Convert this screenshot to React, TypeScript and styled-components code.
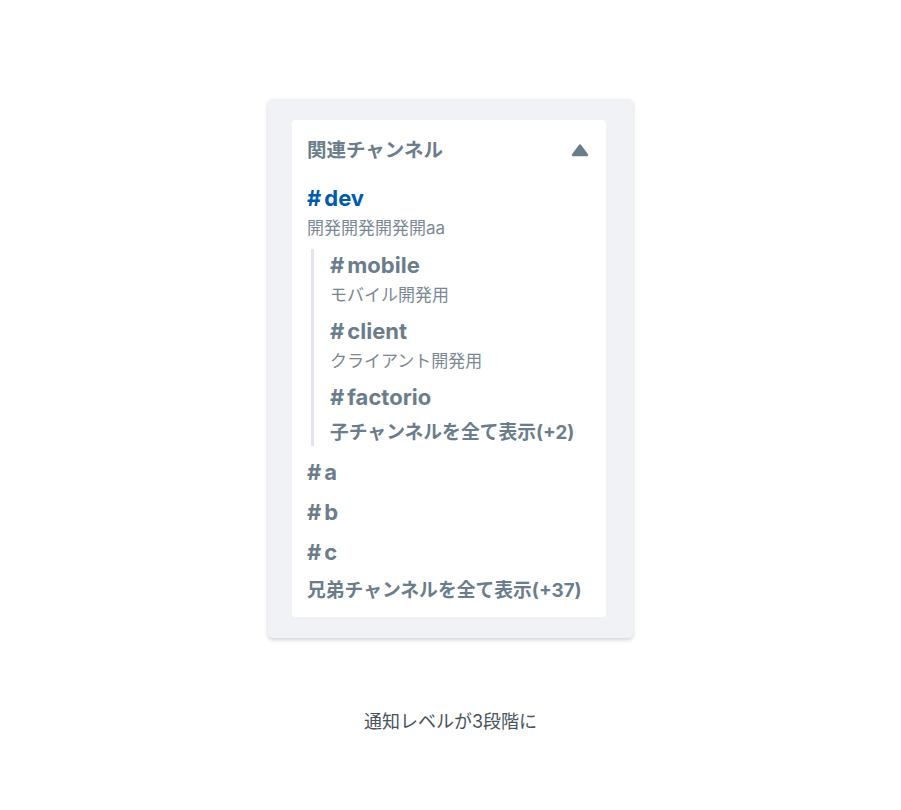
import styled, { createGlobalStyle } from "styled-components";

interface Channel {
  name: string;
  topic?: string;
}

const children: Channel[] = [
  { name: "mobile", topic: "モバイル開発用" },
  { name: "client", topic: "クライアント開発用" },
  { name: "factorio" },
];

const siblings: Channel[] = [{ name: "a" }, { name: "b" }, { name: "c" }];

const ChannelName = ({ name, current }: { name: string; current?: boolean }) => (
  <Name $current={current}>
    <Hash>#</Hash>
    {name}
  </Name>
);

const App = () => {
  return (
    <>
      <GlobalStyle />
      <Page>
        <Panel>
          <Card>
            <Header>
              <Title>関連チャンネル</Title>
              <svg width="18" height="14" viewBox="0 0 18 14">
                <path
                  d="M9 2.5 L16 12 L2 12 Z"
                  fill="#6b7d8a"
                  stroke="#6b7d8a"
                  strokeWidth="2.4"
                  strokeLinejoin="round"
                />
              </svg>
            </Header>
            <Item>
              <ChannelName name="dev" current />
              <Topic>開発開発開発開aa</Topic>
            </Item>
            <Children>
              {children.map((c) => (
                <Item key={c.name}>
                  <ChannelName name={c.name} />
                  {c.topic && <Topic>{c.topic}</Topic>}
                </Item>
              ))}
              <More>子チャンネルを全て表示(+2)</More>
            </Children>
            <Siblings>
              {siblings.map((c) => (
                <ChannelName key={c.name} name={c.name} />
              ))}
            </Siblings>
            <More $gap={12}>兄弟チャンネルを全て表示(+37)</More>
          </Card>
        </Panel>
        <Caption>通知レベルが3段階に</Caption>
      </Page>
    </>
  );
};

export default App;

const GlobalStyle = createGlobalStyle`
  body {
    margin: 0;
    background: #fff;
    font-family: Inter, "Noto Sans CJK JP", sans-serif;
  }
`;
const Page = styled.div`
  display: flex;
  flex-direction: column;
  align-items: center;
  padding-top: 99px;
`;
const Panel = styled.div`
  width: 365px;
  box-sizing: border-box;
  padding: 21px 27px 21px 24px;
  background: #f0f2f5;
  border-radius: 5px;
  box-shadow: 0 2px 4px rgba(0, 0, 0, 0.18);
`;
const Card = styled.div`
  background: #fff;
  border-radius: 4px;
  padding: 17px 15px 13px;
  display: flex;
  flex-direction: column;
`;
const Header = styled.div`
  display: flex;
  align-items: center;
  justify-content: space-between;
  height: 26px;
  margin-bottom: 21px;
  padding-right: 2px;
`;
const Title = styled.h2`
  margin: 0;
  font-size: 19.5px;
  font-weight: 700;
  line-height: 26px;
  color: #6b7d8a;
`;
const Item = styled.div`
  display: flex;
  flex-direction: column;
  gap: 3px;
`;
const Name = styled.div<{ $current?: boolean }>`
  font-size: 22px;
  font-weight: 700;
  line-height: 28px;
  color: ${(p) => (p.$current ? "#005bac" : "#6b7d8a")};
`;
const Hash = styled.span`
  margin-right: 3px;
`;
const Topic = styled.div`
  font-size: 17px;
  line-height: 26px;
  color: #7b8893;
`;
const Children = styled.div`
  margin: 8px 0 0 4px;
  padding: 2px 0 0 16px;
  border-left: 3px solid #e2e6ea;
  display: flex;
  flex-direction: column;
  gap: 9px;
`;
const More = styled.div<{ $gap?: number }>`
  margin-top: ${(p) => p.$gap ?? 0}px;
  font-size: 18.8px;
  font-weight: 700;
  line-height: 26px;
  color: #6b7d8a;
`;
const Siblings = styled.div`
  margin-top: 12px;
  display: flex;
  flex-direction: column;
  gap: 12px;
`;
const Caption = styled.p`
  margin: 72px 0 0;
  font-size: 18px;
  line-height: 24px;
  color: #49535b;
`;
